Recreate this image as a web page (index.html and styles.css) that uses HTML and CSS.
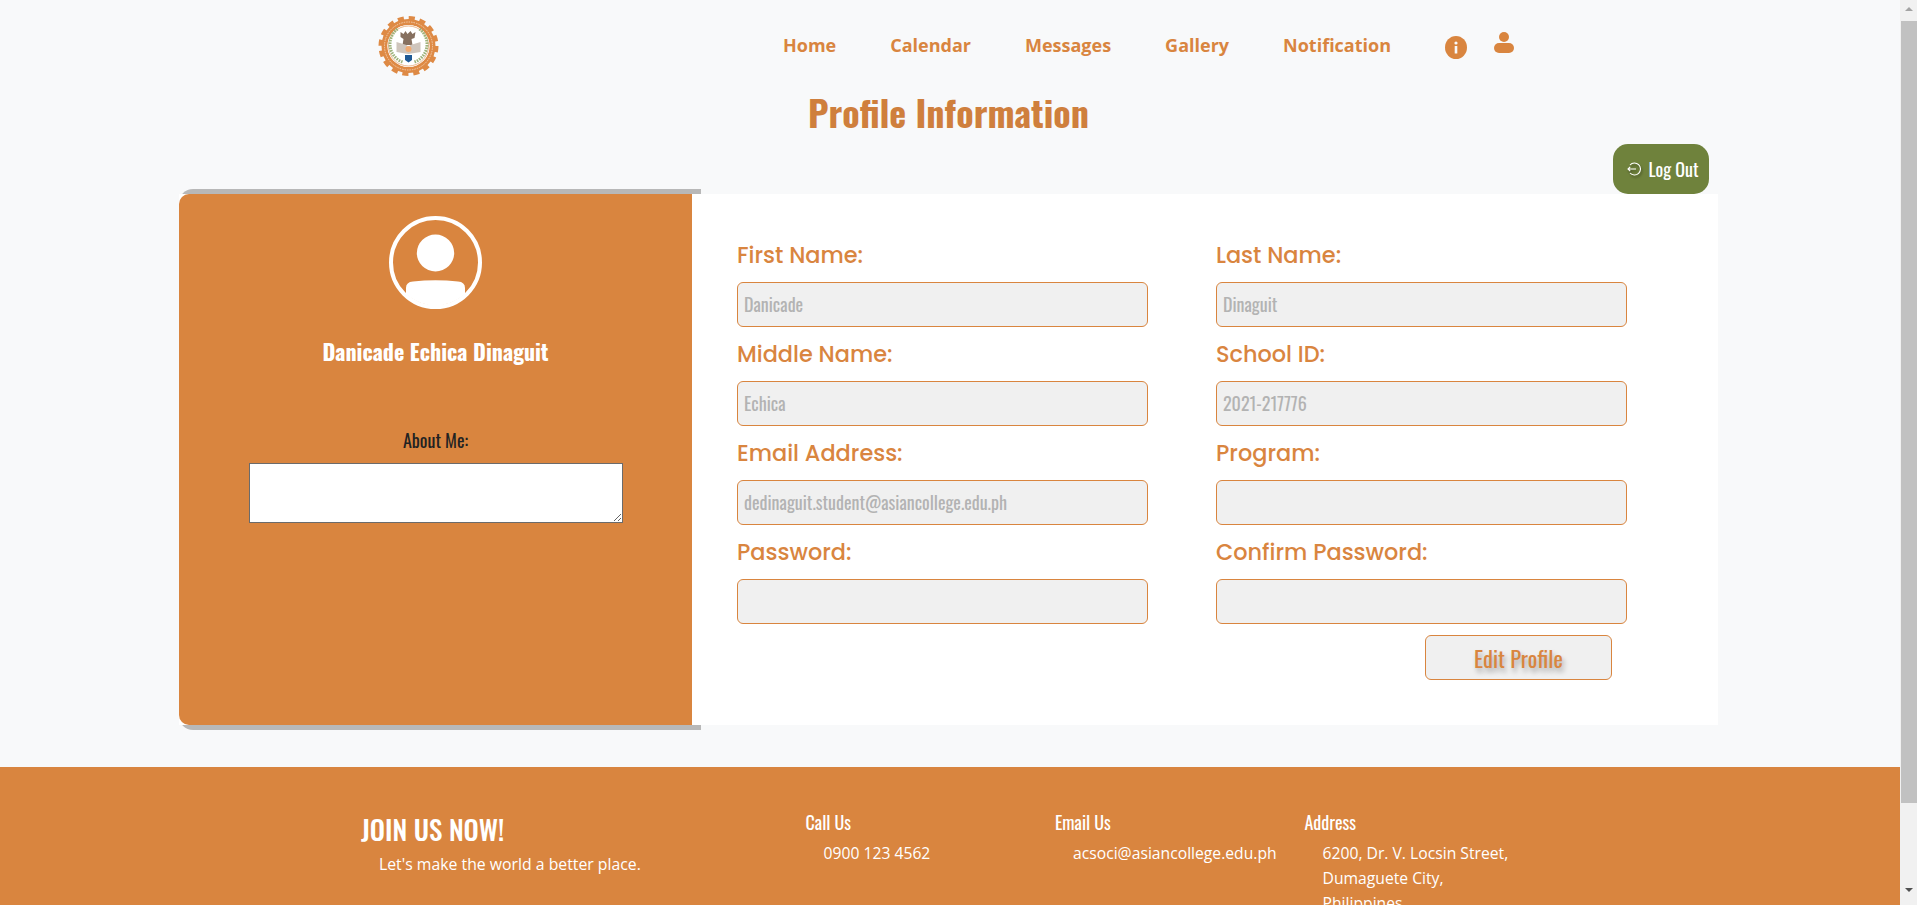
FILE: index.html
```html
<!DOCTYPE html>
<html lang="en">
<head>
    <meta charset="UTF-8">
    <meta name="viewport" content="width=device-width, initial-scale=1.0">
    <title>Profile Information</title>
    <link rel="stylesheet" href="styles.css">
</head>
<body>
    <div class="page">
        <header class="topbar">
            <svg class="logo" viewBox="0 0 60 60" aria-hidden="true">
                <circle cx="30" cy="30" r="27.5" fill="none" stroke="#de8a45" stroke-width="5" stroke-dasharray="6 4.8"/>
                <circle cx="30" cy="30" r="24" fill="none" stroke="#de8a45" stroke-width="6"/>
                <circle cx="30" cy="30" r="24" fill="none" stroke="#f6d9c0" stroke-width="0.8" stroke-dasharray="1.5 1"/>
                <circle cx="30" cy="30" r="21" fill="#fff"/>
                <circle cx="30" cy="30" r="20" fill="none" stroke="#de8a45" stroke-width="0.6"/>
                <path d="M19 13A19 19 0 0 0 24 46" fill="none" stroke="#9db27a" stroke-width="3" stroke-dasharray="1.6 1"/>
                <path d="M41 13A19 19 0 0 1 36 46" fill="none" stroke="#9db27a" stroke-width="3" stroke-dasharray="1.6 1"/>
                <path d="M22 16l3 2 2-3 2 3 3-3 2 3 3-2-1 6-3 1 1 6h-10l1-6-3-2z" fill="#86705f"/>
                <path d="M18 36V26l10 3 2 2 2-2 10-3v10l-12 2z" fill="#cfc5bc"/>
                <circle cx="30" cy="33" r="3" fill="#f0ab73"/>
                <path d="M26.5 39h7v5l-3.500 2.500-3.500-2.500z" fill="#1f5a96"/>
            </svg>
            <nav class="menu">
                <a href="#">Home</a>
                <a href="#">Calendar</a>
                <a href="#">Messages</a>
                <a href="#">Gallery</a>
                <a href="#">Notification</a>
            </nav>
            <svg class="icon-info" viewBox="0 0 22 23" aria-hidden="true">
                <ellipse cx="11" cy="11.500" rx="11" ry="11.500" fill="#d9853f"/>
                <rect x="9.700" y="10" width="2.600" height="7.500" fill="#f8f9fa"/>
                <circle cx="11" cy="7" r="1.600" fill="#f8f9fa"/>
            </svg>
            <svg class="icon-user" viewBox="0 0 20 21" aria-hidden="true">
                <circle cx="10" cy="5" r="5" fill="#d9853f"/>
                <rect x="0" y="11" width="20" height="10" rx="5" fill="#d9853f"/>
            </svg>
        </header>

        <h1 class="title">Profile Information</h1>

        <div class="logout-row">
            <button class="logout" type="button">
                <svg viewBox="0 0 14 14" aria-hidden="true">
                    <path d="M3 3a6 6 0 1 1 0 8M9 7H1M3.200 4.800 1 7l2.200 2.200" fill="none" stroke="#fff" stroke-width="1.100"/>
                </svg>
                Log Out
            </button>
        </div>

        <main class="card">
            <section class="side">
                <svg class="avatar" viewBox="0 0 93 93" aria-hidden="true">
                    <circle cx="46.500" cy="46.500" r="44.500" fill="none" stroke="#fff" stroke-width="4"/>
                    <ellipse cx="46.500" cy="37" rx="18.700" ry="18.500" fill="#fff"/>
                    <path d="M17 76V72Q17 66 24 65.500Q46.500 63 69 65.500Q76 66 76 72V78A44 44 0 0 1 17 78Z" fill="#fff"/>
                </svg>
                <h2 class="fullname">Danicade Echica Dinaguit</h2>
                <label class="about-label" for="about">About Me:</label>
                <textarea class="about" id="about"></textarea>
            </section>

            <form class="details">
                <div class="field">
                    <label for="first">First Name:</label>
                    <input type="text" id="first" value="Danicade" disabled>
                </div>
                <div class="field">
                    <label for="last">Last Name:</label>
                    <input type="text" id="last" value="Dinaguit" disabled>
                </div>
                <div class="field">
                    <label for="middle">Middle Name:</label>
                    <input type="text" id="middle" value="Echica" disabled>
                </div>
                <div class="field">
                    <label for="school">School ID:</label>
                    <input type="text" id="school" value="2021-217776" disabled>
                </div>
                <div class="field">
                    <label for="email">Email Address:</label>
                    <input type="text" id="email" value="dedinaguit.student@asiancollege.edu.ph" disabled>
                </div>
                <div class="field">
                    <label for="program">Program:</label>
                    <input type="text" id="program" disabled>
                </div>
                <div class="field">
                    <label for="password">Password:</label>
                    <input type="password" id="password" disabled>
                </div>
                <div class="field">
                    <label for="confirm">Confirm Password:</label>
                    <input type="password" id="confirm" disabled>
                </div>
                <button class="edit" type="button">Edit Profile</button>
            </form>
        </main>

        <footer class="footer">
            <div class="brand">
                <h3>JOIN US NOW!</h3>
                <p>Let's make the world a better place.</p>
            </div>
            <div class="contact">
                <h4>Call Us</h4>
                <p>0900 123 4562</p>
            </div>
            <div class="contact">
                <h4>Email Us</h4>
                <p>acsoci@asiancollege.edu.ph</p>
            </div>
            <div class="contact">
                <h4>Address</h4>
                <p>6200, Dr. V. Locsin Street,<br>Dumaguete City,<br>Philippines</p>
            </div>
        </footer>
    </div>

    <div class="scrollbar">
        <span class="arrow-up"></span>
        <span class="thumb"></span>
        <span class="arrow-down"></span>
    </div>
</body>
</html>
```

FILE: styles.css
```css
html,
body {
    height: 905px;
    overflow: hidden;
}

body {
    margin: 0;
    display: flex;
    background-color: #f8f9fa;
    font-family: "Open Sans", sans-serif;
}

.page {
    width: 1900px;
    height: 905px;
    overflow: hidden;
}

/* top bar */
.topbar {
    display: flex;
    align-items: center;
    padding: 16px 0 0 378px;
}

.logo {
    width: 61px;
    height: 60px;
}

.menu {
    display: flex;
    gap: 54px;
    margin-left: 344px;
    margin-bottom: 3px;
}

.menu a {
    color: #d9853f;
    font-size: 18px;
    font-weight: 700;
    text-decoration: none;
}

.icon-info {
    width: 22px;
    height: 23px;
    margin-left: 54px;
    margin-top: 3px;
}

.icon-user {
    width: 20px;
    height: 21px;
    margin-left: 27px;
    margin-bottom: 7px;
}

.title {
    margin: 11px 0 0;
    color: #cf7f3d;
    font-family: "Oswald", "Liberation Sans Narrow", sans-serif;
    font-size: 36px;
    font-weight: 700;
    line-height: 50px;
    text-align: center;
    padding-right: 3px;
}

.logout-row {
    display: flex;
    justify-content: flex-end;
    margin-top: 7px;
    padding-right: 191px;
}

.logout {
    display: flex;
    align-items: center;
    justify-content: center;
    gap: 8px;
    width: 96px;
    height: 50px;
    padding: 0 0 1px 3px;
    border: none;
    border-radius: 15px;
    background-color: #6f823c;
    color: #fff;
    font-family: "Oswald", "Liberation Sans Narrow", sans-serif;
    font-size: 18px;
}

.logout svg {
    width: 14px;
    height: 14px;
    filter: drop-shadow(1px 2px 1px rgba(0, 0, 0, 0.4));
}

/* main card */
.card {
    display: flex;
    width: 1539px;
    height: 531px;
    margin-left: 179px;
    background-color: #fff;
}

.side {
    position: relative;
    display: flex;
    flex-direction: column;
    align-items: center;
    width: 513px;
    padding-top: 22px;
    box-sizing: border-box;
    background-color: #d9853f;
    border-radius: 10px 0 0 10px;
}

/* gray strip that peeks out above and below the orange panel */
.side::before {
    content: "";
    position: absolute;
    top: -5px;
    bottom: -5px;
    left: 0;
    right: -9px;
    z-index: -1;
    background-color: #b8b8b8;
    border-radius: 14px 0 0 14px;
}

.avatar {
    width: 93px;
    height: 93px;
    flex-shrink: 0;
}

.fullname {
    margin: 27px 0 0;
    color: #fff;
    font-family: "Oswald", "Liberation Sans Narrow", sans-serif;
    font-size: 22px;
    font-weight: 700;
    line-height: 30px;
}

.about-label {
    margin-top: 62px;
    color: #222;
    font-family: "Oswald", "Liberation Sans Narrow", sans-serif;
    font-size: 18px;
    font-weight: 400;
    line-height: 24px;
}

.about {
    display: block;
    width: 374px;
    height: 60px;
    margin-top: 11px;
    box-sizing: border-box;
    background-color: #fff;
    border: 1px solid #6b6b6b;
}

.details {
    display: grid;
    grid-template-columns: 411px 411px;
    grid-auto-rows: min-content;
    column-gap: 68px;
    row-gap: 11px;
    padding: 45px 0 0 45px;
}

.field label {
    display: block;
    margin-bottom: 11px;
    color: #d9853f;
    font-family: "Poppins", "Inter", sans-serif;
    font-size: 22.400px;
    font-weight: 500;
    line-height: 32px;
}

.field input {
    display: block;
    width: 100%;
    height: 45px;
    padding: 0 6px 2px;
    box-sizing: border-box;
    background-color: #f0f0f0;
    border: 1px solid #d9853f;
    border-radius: 6px;
    color: #b3b3b3;
    font-family: "Oswald", "Liberation Sans Narrow", sans-serif;
    font-size: 18px;
    font-weight: 400;
    opacity: 1;
}

.edit {
    grid-column: 2;
    justify-self: end;
    width: 187px;
    height: 45px;
    margin-right: 15px;
    background-color: #f0f0f0;
    border: 1px solid #d9853f;
    border-radius: 6px;
    color: #d9853f;
    font-family: "Oswald", "Liberation Sans Narrow", sans-serif;
    font-size: 22.400px;
    font-weight: 400;
    text-shadow: 2px 4px 5px rgba(0, 0, 0, 0.3);
}

/* footer */
.footer {
    display: flex;
    height: 138px;
    margin-top: 42px;
    padding: 42px 0 0 361px;
    box-sizing: border-box;
    background-color: #d9853f;
    color: #fff;
}

.brand {
    width: 444.500px;
}

.brand h3 {
    margin: 0;
    font-family: "Oswald", "Liberation Sans Narrow", sans-serif;
    font-size: 27px;
    font-weight: 500;
    line-height: 40px;
}

.brand p {
    margin: 0;
    padding-left: 18px;
    font-size: 15.800px;
    line-height: 30px;
}

.contact {
    width: 249.500px;
    padding-top: 1px;
}

.contact h4 {
    margin: 0;
    font-family: "Oswald", "Liberation Sans Narrow", sans-serif;
    font-size: 18px;
    font-weight: 400;
    line-height: 24px;
}

.contact p {
    margin: 7px 0 0;
    padding-left: 18px;
    font-size: 15.700px;
    line-height: 25px;
    white-space: nowrap;
}

/* scrollbar */
.scrollbar {
    display: flex;
    flex-direction: column;
    align-items: center;
    width: 17px;
    height: 905px;
    background-color: #f1f1f1;
}

.arrow-up,
.arrow-down {
    width: 0;
    height: 0;
    border-left: 4px solid transparent;
    border-right: 4px solid transparent;
}

.arrow-up {
    margin-top: 7px;
    border-bottom: 4px solid #a3a3a3;
}

.arrow-down {
    margin-top: 85px;
    border-top: 4px solid #505050;
}

.thumb {
    width: 16px;
    height: 782px;
    margin-top: 10px;
    background-color: #c1c1c1;
}
```
